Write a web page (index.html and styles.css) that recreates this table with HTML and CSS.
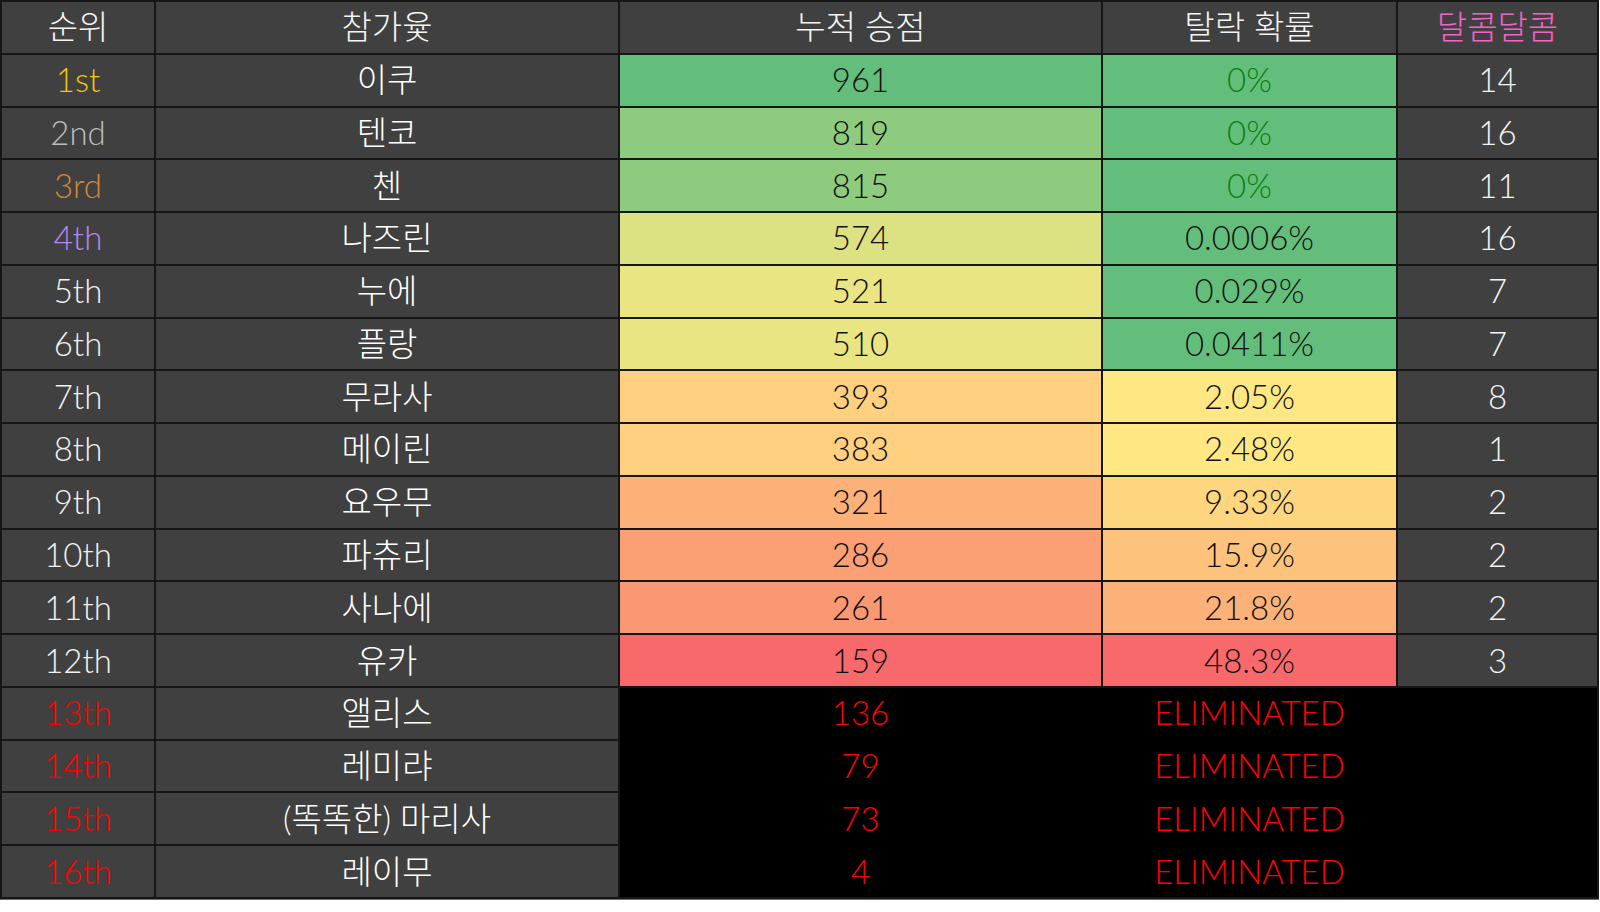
FILE: index.html
```html
<!DOCTYPE html>
<html lang="ko">
<head>
<meta charset="utf-8">
<title>순위표</title>
<link rel="stylesheet" href="styles.css">
</head>
<body>
<div class="board">
  <div class="cell head ko">순위</div>
  <div class="cell head ko">참가윷</div>
  <div class="cell head ko">누적 승점</div>
  <div class="cell head ko">탈락 확률</div>
  <div class="cell head ko pink">달콤달콤</div>

  <div class="cell rank gold">1st</div>
  <div class="cell name ko">이쿠</div>
  <div class="cell val bg-green">961</div>
  <div class="cell val bg-green safe">0%</div>
  <div class="cell sweet">14</div>

  <div class="cell rank silver">2nd</div>
  <div class="cell name ko">텐코</div>
  <div class="cell val bg-lgreen">819</div>
  <div class="cell val bg-green safe">0%</div>
  <div class="cell sweet">16</div>

  <div class="cell rank bronze">3rd</div>
  <div class="cell name ko">첸</div>
  <div class="cell val bg-lgreen">815</div>
  <div class="cell val bg-green safe">0%</div>
  <div class="cell sweet">11</div>

  <div class="cell rank purple">4th</div>
  <div class="cell name ko">나즈린</div>
  <div class="cell val bg-lime">574</div>
  <div class="cell val bg-green">0.0006%</div>
  <div class="cell sweet">16</div>

  <div class="cell rank">5th</div>
  <div class="cell name ko">누에</div>
  <div class="cell val bg-khaki">521</div>
  <div class="cell val bg-green">0.029%</div>
  <div class="cell sweet">7</div>

  <div class="cell rank">6th</div>
  <div class="cell name ko">플랑</div>
  <div class="cell val bg-khaki">510</div>
  <div class="cell val bg-green">0.0411%</div>
  <div class="cell sweet">7</div>

  <div class="cell rank">7th</div>
  <div class="cell name ko">무라사</div>
  <div class="cell val bg-amber">393</div>
  <div class="cell val bg-yellow">2.05%</div>
  <div class="cell sweet">8</div>

  <div class="cell rank">8th</div>
  <div class="cell name ko">메이린</div>
  <div class="cell val bg-amber">383</div>
  <div class="cell val bg-yellow">2.48%</div>
  <div class="cell sweet">1</div>

  <div class="cell rank">9th</div>
  <div class="cell name ko">요우무</div>
  <div class="cell val bg-peach">321</div>
  <div class="cell val bg-sand">9.33%</div>
  <div class="cell sweet">2</div>

  <div class="cell rank">10th</div>
  <div class="cell name ko">파츄리</div>
  <div class="cell val bg-salmon">286</div>
  <div class="cell val bg-apricot">15.9%</div>
  <div class="cell sweet">2</div>

  <div class="cell rank">11th</div>
  <div class="cell name ko">사나에</div>
  <div class="cell val bg-coral">261</div>
  <div class="cell val bg-peach">21.8%</div>
  <div class="cell sweet">2</div>

  <div class="cell rank">12th</div>
  <div class="cell name ko">유카</div>
  <div class="cell val bg-red">159</div>
  <div class="cell val bg-red">48.3%</div>
  <div class="cell sweet">3</div>

  <div class="cell rank out">13th</div>
  <div class="cell name ko">앨리스</div>
  <div class="cell rank out">14th</div>
  <div class="cell name ko">레미랴</div>
  <div class="cell rank out">15th</div>
  <div class="cell name ko">(똑똑한) 마리사</div>
  <div class="cell rank out">16th</div>
  <div class="cell name ko">레이무</div>

  <div class="elim">
    <div class="cell out">136</div><div class="cell out">ELIMINATED</div><div class="cell"></div>
    <div class="cell out">79</div><div class="cell out">ELIMINATED</div><div class="cell"></div>
    <div class="cell out">73</div><div class="cell out">ELIMINATED</div><div class="cell"></div>
    <div class="cell out">4</div><div class="cell out">ELIMINATED</div><div class="cell"></div>
  </div>
</div>
</body>
</html>
```

FILE: styles.css
```css
html, body {
  margin: 0;
  padding: 0;
  background: #ffffff;
}

body {
  width: 1600px;
  height: 912px;
  overflow: hidden;
  font-family: "Lato", "Noto Sans CJK KR", sans-serif;
  font-weight: 300;
}

.board {
  box-sizing: border-box;
  width: 1599px;
  height: 900px;
  padding: 2px;
  display: grid;
  grid-template-columns: 152px 462px 481px 293px 199px;
  grid-template-rows: repeat(17, 1fr);
  gap: 2px;
  background: #161616;
  border-bottom: 1px solid #6e6e6e;
}

.cell {
  display: flex;
  align-items: center;
  justify-content: center;
  background: #404040;
  color: #ffffff;
  font-size: 33px;
  line-height: 1;
  white-space: nowrap;
  padding-bottom: 1px;
}

.ko {
  font-family: "Lato", "Noto Sans CJK KR", sans-serif;
  font-size: 33px;
  font-weight: 300;
}

.head { color: #f4f4f4; }
.pink { color: #f263c6; }

.rank { color: #f2f2f2; }
.gold { color: #f2c800; }
.silver { color: #bdbdbd; }
.bronze { color: #d4873a; }
.purple { color: #b587ef; }
.out { color: #ff0000; }

.val { color: #111111; }
.safe { color: #0b7f0e; }
.sweet { color: #f4f4f4; }

.bg-green { background: #63be7b; }
.bg-lgreen { background: #8fcb7e; }
.bg-lime { background: #dce182; }
.bg-khaki { background: #eae583; }
.bg-yellow { background: #ffe884; }
.bg-amber { background: #fed07f; }
.bg-sand { background: #fed680; }
.bg-apricot { background: #fdc37c; }
.bg-peach { background: #fcb179; }
.bg-salmon { background: #fb9f75; }
.bg-coral { background: #fa9873; }
.bg-red { background: #f8696b; }

.elim {
  grid-column: 3 / 6;
  grid-row: 14 / 18;
  display: grid;
  grid-template-columns: subgrid;
  grid-template-rows: subgrid;
  background: #000000;
}

.elim .cell {
  background: #000000;
}
```
